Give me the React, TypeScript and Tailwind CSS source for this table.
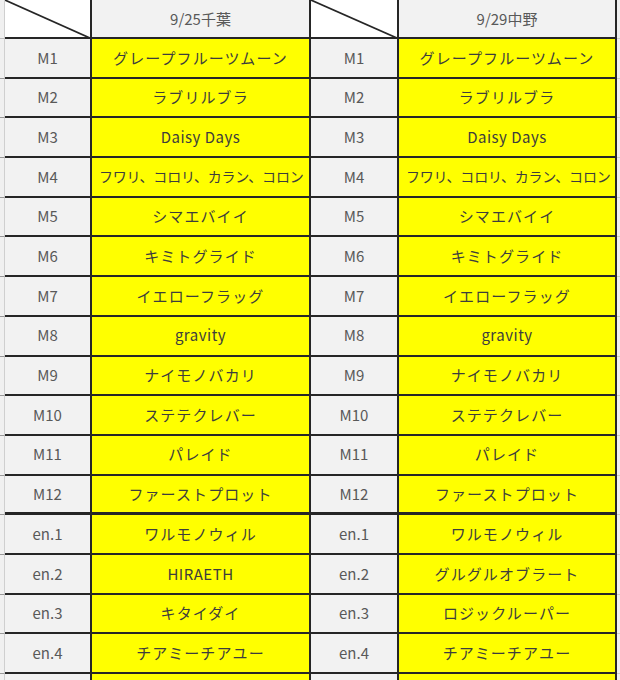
import React from 'react';

type Row = { label: string; a: string; b: string; tight?: boolean; thick?: boolean };

const rows: Row[] = [
  { label: 'M1', a: 'グレープフルーツムーン', b: 'グレープフルーツムーン' },
  { label: 'M2', a: 'ラブリルブラ', b: 'ラブリルブラ' },
  { label: 'M3', a: 'Daisy Days', b: 'Daisy Days' },
  { label: 'M4', a: 'フワリ、コロリ、カラン、コロン', b: 'フワリ、コロリ、カラン、コロン', tight: true },
  { label: 'M5', a: 'シマエバイイ', b: 'シマエバイイ' },
  { label: 'M6', a: 'キミトグライド', b: 'キミトグライド' },
  { label: 'M7', a: 'イエローフラッグ', b: 'イエローフラッグ' },
  { label: 'M8', a: 'gravity', b: 'gravity' },
  { label: 'M9', a: 'ナイモノバカリ', b: 'ナイモノバカリ' },
  { label: 'M10', a: 'ステテクレバー', b: 'ステテクレバー' },
  { label: 'M11', a: 'パレイド', b: 'パレイド' },
  { label: 'M12', a: 'ファーストプロット', b: 'ファーストプロット', thick: true },
  { label: 'en.1', a: 'ワルモノウィル', b: 'ワルモノウィル' },
  { label: 'en.2', a: 'HIRAETH', b: 'グルグルオブラート' },
  { label: 'en.3', a: 'キタイダイ', b: 'ロジックルーパー' },
  { label: 'en.4', a: 'チアミーチアユー', b: 'チアミーチアユー' },
  { label: '', a: '', b: '' },
];

const font = { fontFamily: '"Noto Sans CJK JP", "Noto Sans", sans-serif' };

// katakana titles are spaced a bit wider than latin ones
const isKana = (s: string) => /[\u30a0-\u30ff]/.test(s);

function Diagonal() {
  return (
    <svg className="absolute left-0 top-0 w-[calc(100%+2px)] h-[calc(100%+2px)]" preserveAspectRatio="none" viewBox="0 0 100 100">
      <line x1="0" y1="0" x2="100" y2="100" stroke="#262626" strokeWidth="1.6" vectorEffect="non-scaling-stroke" />
    </svg>
  );
}

function DataCell({ text, tight, width, thick }: { text: string; tight?: boolean; width: string; thick?: boolean }) {
  let textCls = 'justify-center text-[15px] tracking-[0.5px]';
  if (tight) textCls = 'justify-start pl-[7px] text-[14px] tracking-[-0.2px]';
  else if (isKana(text)) textCls = 'justify-center text-[15px] tracking-[1.1px]';

  return (
    <div
      className={`${width} shrink-0 bg-[#ffff00] border-r-2 border-r-[#262626] ${thick ? 'border-b-[3px]' : 'border-b-2'} border-b-[#262626] flex items-center overflow-hidden whitespace-nowrap text-[#3d3d3d] ${textCls}`}
    >
      {text}
    </div>
  );
}

function LabelCell({ text, width, thick }: { text: string; width: string; thick?: boolean }) {
  return (
    <div
      className={`${width} shrink-0 bg-[#f2f2f2] border-r-2 border-r-[#262626] ${thick ? 'border-b-[3px]' : 'border-b-2'} border-b-[#262626] flex items-center justify-center text-[15px] text-[#595959]`}
    >
      {text}
    </div>
  );
}

export default function App() {
  return (
    <div className="w-[620px] h-[680px] overflow-hidden bg-white" style={font}>
      {/* header */}
      <div className="flex h-[39px]">
        <div className="w-[5px] shrink-0 bg-[#f0f0f0] border-r border-r-[#cfcfcf] border-b border-b-[#bdbdbd]" />
        <div className="relative w-[87px] shrink-0 bg-white border-r-2 border-r-[#262626] border-b-2 border-b-[#262626]">
          <Diagonal />
        </div>
        <div className="w-[219px] shrink-0 bg-[#f2f2f2] border-r-2 border-r-[#262626] border-b-2 border-b-[#262626] flex items-center justify-center pt-[2px] text-[15px] text-[#595959]">
          9/25千葉
        </div>
        <div className="relative w-[88px] shrink-0 bg-white border-r-2 border-r-[#262626] border-b-2 border-b-[#262626]">
          <Diagonal />
        </div>
        <div className="w-[218px] shrink-0 bg-[#f2f2f2] border-r-2 border-r-[#262626] border-b-2 border-b-[#262626] flex items-center justify-center pt-[2px] text-[15px] text-[#595959]">
          9/29中野
        </div>
        <div className="flex-1 bg-[#f0f0f0] border-b border-b-[#cfcfcf]" />
      </div>

      {rows.map((r, i) => (
        <div key={i} className="flex h-[39.7px]">
          <div className="w-[5px] shrink-0 bg-[#f0f0f0] border-r border-r-[#cfcfcf] border-b border-b-[#9a9a9a]" />
          <LabelCell text={r.label} width="w-[87px]" thick={r.thick} />
          <DataCell text={r.a} tight={r.tight} width="w-[219px]" thick={r.thick} />
          <LabelCell text={r.label} width="w-[88px]" thick={r.thick} />
          <DataCell text={r.b} tight={r.tight} width="w-[218px]" thick={r.thick} />
          <div className="flex-1 bg-[#f0f0f0] border-b border-b-[#cfcfcf]" />
        </div>
      ))}
    </div>
  );
}
